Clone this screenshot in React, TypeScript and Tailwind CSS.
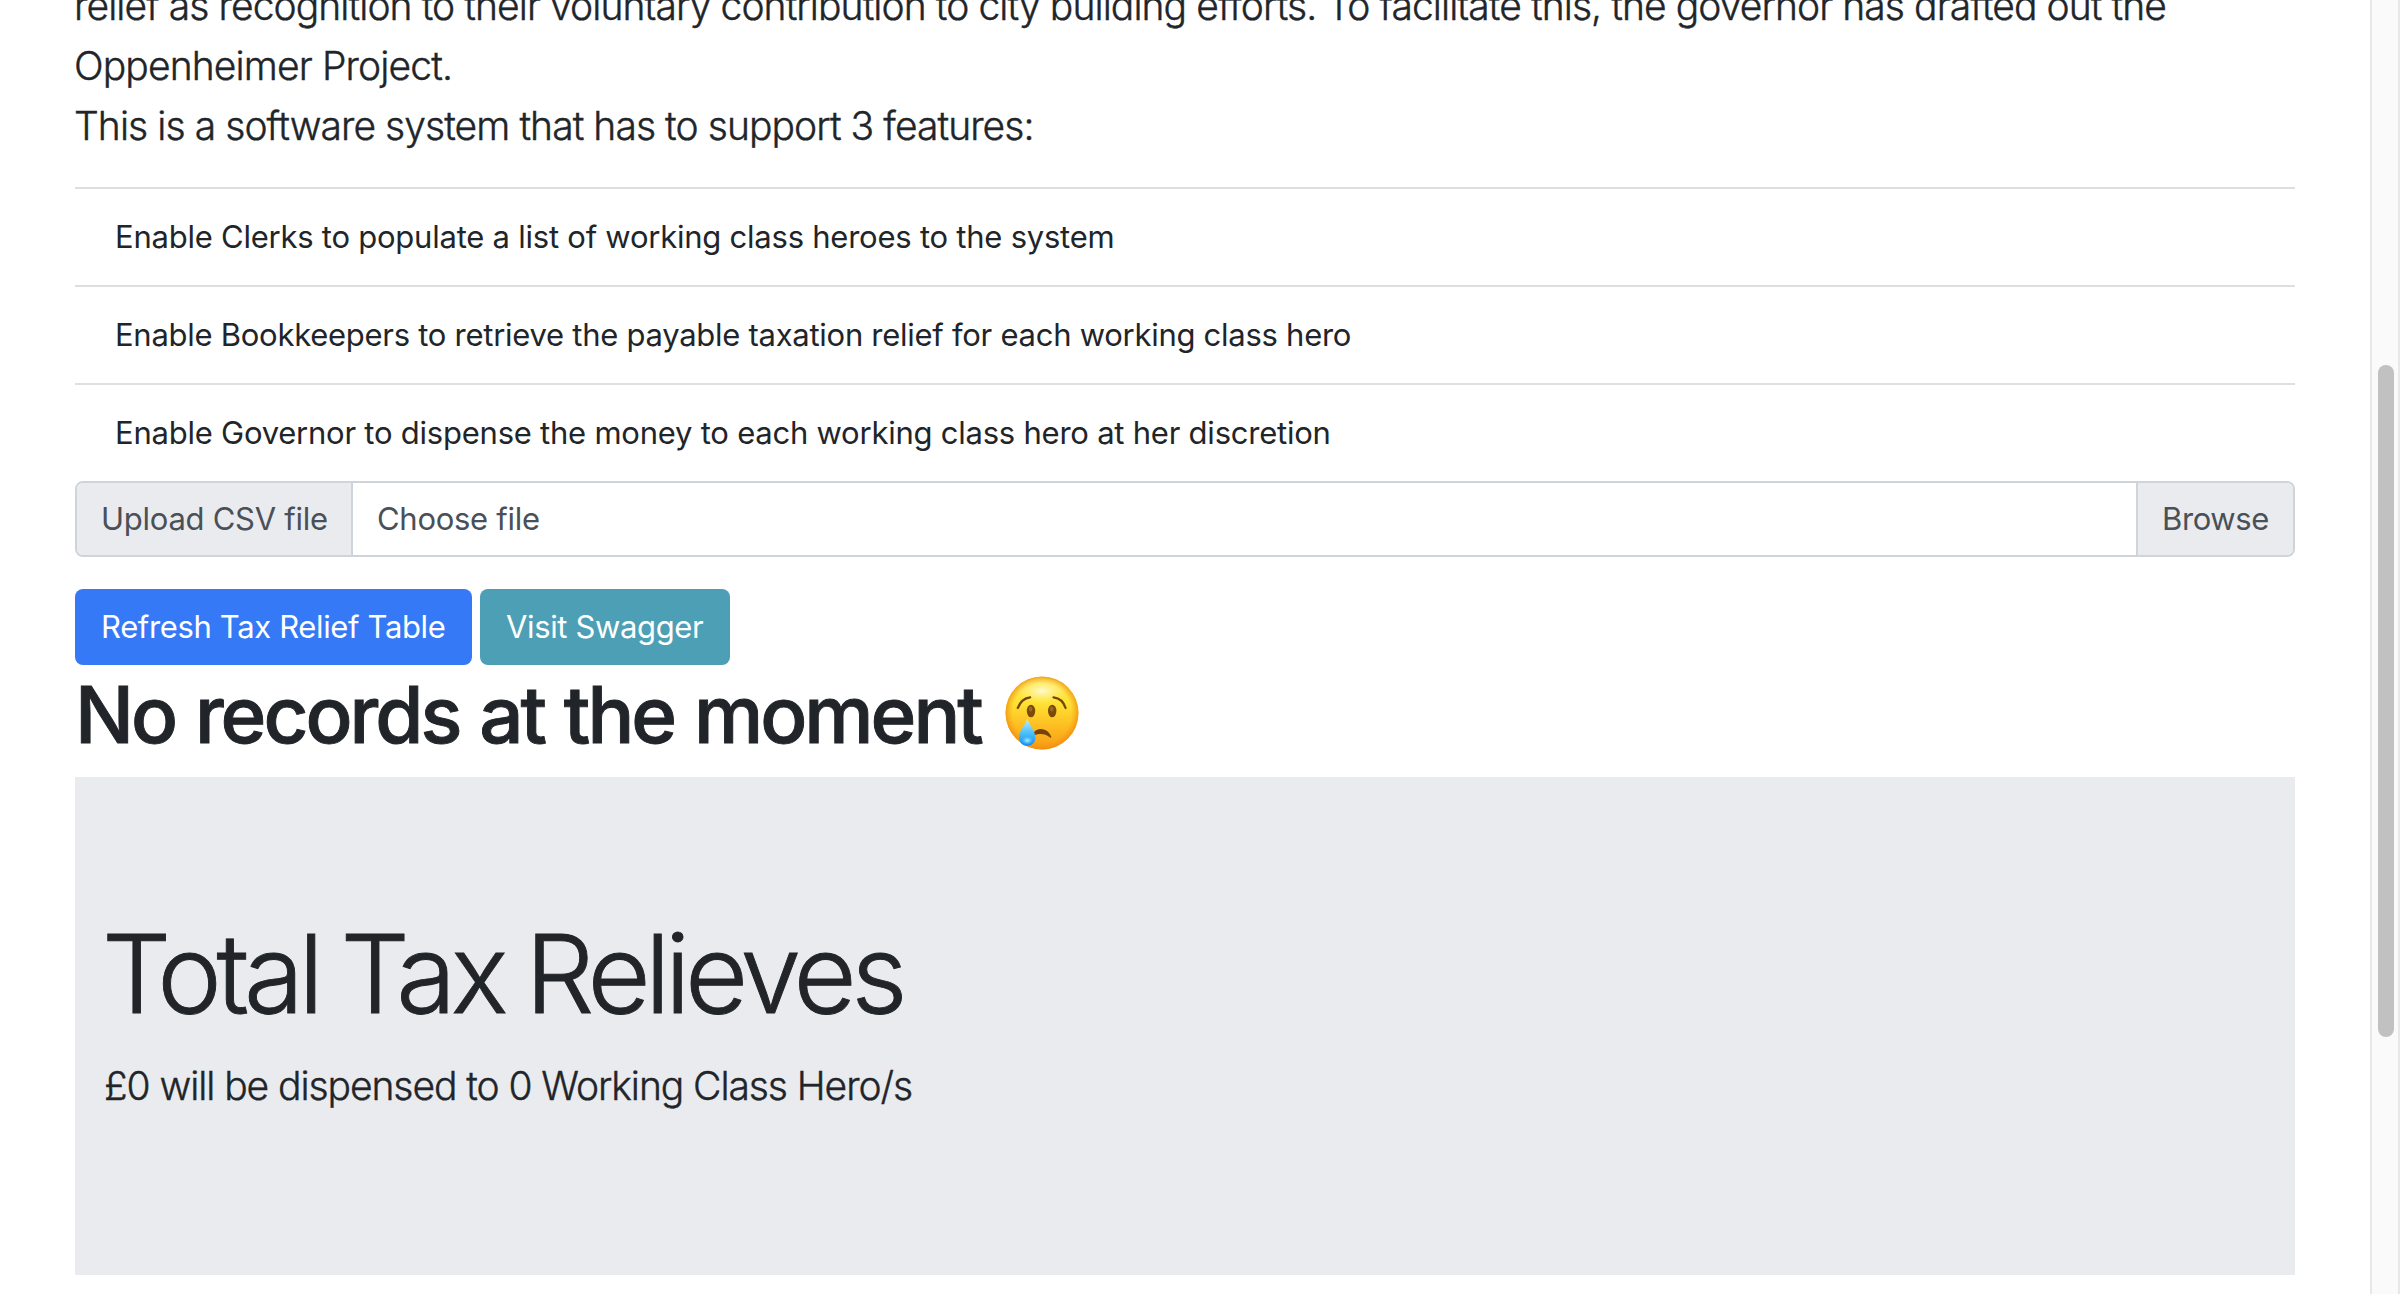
const features = [
  { text: "Enable Clerks to populate a list of working class heroes to the system", spacing: "tracking-[-0.0076em]" },
  { text: "Enable Bookkeepers to retrieve the payable taxation relief for each working class hero", spacing: "tracking-[-0.0087em]" },
  { text: "Enable Governor to dispense the money to each working class hero at her discretion", spacing: "tracking-[-0.0075em]" },
];

function CryingFace() {
  return (
    <svg viewBox="0 0 74 74" className="h-[74px] w-[74px]" role="img" aria-label="Crying face">
      <defs>
        <linearGradient id="face" x1="0" y1="0" x2="0" y2="1">
          <stop offset="0" stopColor="#ffe95c" />
          <stop offset="0.35" stopColor="#fee333" />
          <stop offset="0.7" stopColor="#fdbb21" />
          <stop offset="1" stopColor="#f79a15" />
        </linearGradient>
        <radialGradient id="rim" cx="0.5" cy="0.5" r="0.5">
          <stop offset="0.8" stopColor="#f59a12" stopOpacity="0" />
          <stop offset="1" stopColor="#ef8b10" stopOpacity="0.75" />
        </radialGradient>
        <radialGradient id="shine" cx="0.5" cy="0.5" r="0.5">
          <stop offset="0" stopColor="#fffde0" stopOpacity="0.9" />
          <stop offset="1" stopColor="#fff38a" stopOpacity="0" />
        </radialGradient>
        <linearGradient id="tear" x1="0" y1="0" x2="0" y2="1">
          <stop offset="0" stopColor="#c9efff" />
          <stop offset="0.5" stopColor="#4fc3fa" />
          <stop offset="1" stopColor="#128df0" />
        </linearGradient>
        <radialGradient id="tearGlow" cx="0.5" cy="0.5" r="0.5">
          <stop offset="0" stopColor="#b9f4ff" stopOpacity="0.95" />
          <stop offset="1" stopColor="#6fd4ff" stopOpacity="0" />
        </radialGradient>
      </defs>
      <circle cx="37" cy="37" r="36.5" fill="url(#face)" />
      <circle cx="37" cy="37" r="36.5" fill="url(#rim)" />
      <ellipse cx="37" cy="15" rx="25" ry="13" fill="url(#shine)" />
      <ellipse cx="26" cy="35" rx="4.2" ry="6.3" fill="#7a4a0a" />
      <ellipse cx="47.2" cy="35" rx="4.2" ry="6.3" fill="#7a4a0a" />
      <ellipse cx="25.6" cy="33" rx="1.8" ry="2.6" fill="#9b6a1c" />
      <ellipse cx="46.8" cy="33" rx="1.8" ry="2.6" fill="#9b6a1c" />
      <path d="M12.8 32C15 26 19 22 25.2 21.3" fill="none" stroke="#74430a" strokeWidth="2.2" strokeLinecap="round" />
      <path d="M48.5 21.3C54.5 22 58.8 26 60.6 32" fill="none" stroke="#74430a" strokeWidth="2.2" strokeLinecap="round" />
      <path d="M29 57.2C33 52.2 42 52.2 45.6 61C40 56.5 35 56.5 29 58.5Z" fill="#74430a" stroke="#74430a" strokeWidth="1.4" strokeLinejoin="round" />
      <path d="M22.2 42.5C24 49 30.4 54.5 30.4 61.5C30.4 66.5 27 69.8 22.2 69.8C17.4 69.8 14 66.5 14 61.5C14 54.5 20.6 49 22.2 42.5Z" fill="url(#tear)" />
      <ellipse cx="22.3" cy="64.5" rx="5.8" ry="4.2" fill="url(#tearGlow)" />
    </svg>
  );
}

export default function App() {
  return (
    <div className="flex h-[1294px] w-[2400px] overflow-hidden bg-white font-[Inter,'Liberation_Sans',sans-serif] text-[31px] leading-[48px] text-[#212529]">
      <main className="w-[2370px] shrink-0 pr-[75px] pl-[75px]">
        <p className="-mt-6 mb-[31px] h-[180px] text-[39px] leading-[60px] font-light whitespace-nowrap [-webkit-text-stroke:0.4px_#212529]">
          <span className="-ml-px block tracking-[-0.0236em]">
            relief as recognition to their voluntary contribution to city building efforts. To facilitate this, the governor has drafted out the
          </span>
          <span className="-ml-px block tracking-[-0.0223em]">Oppenheimer Project.</span>
          <span className="-ml-px block tracking-[-0.024em]">This is a software system that has to support 3 features:</span>
        </p>

        <ul>
          {features.map((f) => (
            <li key={f.text} className="h-[98px] border-t-2 border-[#dfdfdf] px-10 py-6">
              <span className={f.spacing}>{f.text}</span>
            </li>
          ))}
        </ul>

        <div className="flex h-[76px] overflow-hidden rounded-lg border-2 border-[#ced4da] text-[#495057]">
          <label className="w-[276px] border-r-2 border-[#ced4da] bg-[#eaebef] py-3 pl-6 tracking-[-0.0085em]">Upload CSV file</label>
          <span className="flex-1 py-3 pl-6 tracking-[-0.009em]">Choose file</span>
          <button className="w-[157px] border-l-2 border-[#ced4da] bg-[#eaebef] py-3 pl-6 text-left tracking-[-0.012em]">Browse</button>
        </div>

        <div className="mt-8 flex gap-2 text-white">
          <button className="h-[76px] w-[397px] rounded-lg bg-[#3579f6] pl-[26px] text-left tracking-[-0.0115em]">Refresh Tax Relief Table</button>
          <button className="h-[76px] w-[250px] rounded-lg bg-[#4c9fb4] pl-[26px] text-left tracking-[-0.0118em]">Visit Swagger</button>
        </div>

        <h1 className="mb-4 flex h-24 items-start text-[78px] leading-[99px] font-medium whitespace-nowrap">
          <span className="w-[930px] tracking-[-0.0385em] [word-spacing:2px] [-webkit-text-stroke:0.9px_#212529]">No records at the moment</span>
          <span className="pt-[11px]"><CryingFace /></span>
        </h1>

        <section className="h-[498px] bg-[#eaebef] px-[30px] pt-32">
          <h2 className="-ml-[3px] mb-4 h-[134px] text-[109px] leading-[137px] font-light tracking-[-0.0505em] [word-spacing:-3px] [-webkit-text-stroke:0.9px_#212529]">Total Tax Relieves</h2>
          <p className="-ml-px text-[39px] leading-[62px] font-light tracking-[-0.0275em] [-webkit-text-stroke:0.4px_#212529]">£0 will be dispensed to 0 Working Class Hero/s</p>
        </section>
      </main>

      <aside className="flex h-full w-[30px] shrink-0 border-x-2 border-[#e8e8e8] bg-[#fafafa] pt-[365px] pl-1.5">
        <div className="h-[672px] w-4 rounded-full bg-[#c1c1c1]" />
      </aside>
    </div>
  );
}
